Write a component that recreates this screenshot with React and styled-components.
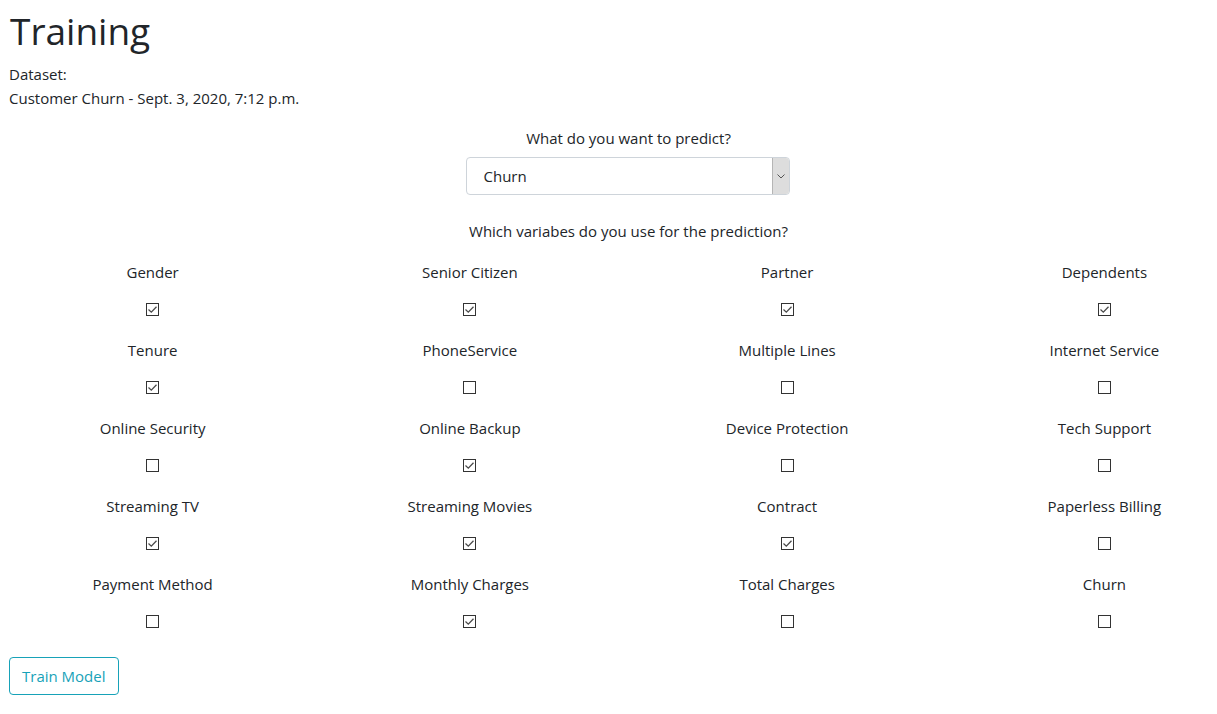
import React from 'react';
import styled, { createGlobalStyle } from 'styled-components';

const GlobalStyle = createGlobalStyle`
    html, body {
        margin: 0;
        padding: 0;
        background: #fff;
        overflow: hidden;
    }
    body {
        font-family: "Open Sans", "Noto Sans", sans-serif;
        font-size: 15px;
        line-height: 24px;
        color: #212529;
    }
`;

const variables = [
    ['Gender', true], ['Senior Citizen', true], ['Partner', true], ['Dependents', true],
    ['Tenure', true], ['PhoneService', false], ['Multiple Lines', false], ['Internet Service', false],
    ['Online Security', false], ['Online Backup', true], ['Device Protection', false], ['Tech Support', false],
    ['Streaming TV', true], ['Streaming Movies', true], ['Contract', true], ['Paperless Billing', false],
    ['Payment Method', false], ['Monthly Charges', true], ['Total Charges', false], ['Churn', false],
];

const Check = ({ checked }) => (
    <StyledCheck>
        {checked && (
            <svg width="11" height="11" viewBox="0 0 11 11">
                <path d="M1.5 5.5 L4.3 8.2 L9.5 2.8" fill="none" stroke="#4a4a4a" strokeWidth="1.3" />
            </svg>
        )}
    </StyledCheck>
);

const App = () => {
    return (
        <Page>
            <GlobalStyle />
            <Title>Training</Title>
            <Meta>Dataset:</Meta>
            <Meta>Customer Churn - Sept. 3, 2020, 7:12 p.m.</Meta>
            <Form>
                <Question>What do you want to predict?</Question>
                <SelectBox>
                    <span>Churn</span>
                    <SelectArrow>
                        <svg width="10" height="7" viewBox="0 0 10 7">
                            <path d="M1.5 1.5 L5 5 L8.5 1.5" fill="none" stroke="#555" strokeWidth="1" />
                        </svg>
                    </SelectArrow>
                </SelectBox>
                <Question $top="24px">Which variabes do you use for the prediction?</Question>
                <Grid>
                    {variables.map(([name, checked]) => (
                        <Cell key={name}>
                            <span>{name}</span>
                            <Check checked={checked} />
                        </Cell>
                    ))}
                </Grid>
            </Form>
            <Button>Train Model</Button>
        </Page>
    );
};

const Page = styled.div`
    padding: 5px 10px 0 10px;
`;

const Title = styled.h1`
    margin: 0 0 7px 0;
    padding-top: 2px;
    font-size: 37px;
    line-height: 48px;
    font-weight: 400;
`;

const Meta = styled.div`
    margin-left: -1px;
`;

const Form = styled.div`
    width: 1269px;
    margin-left: -16px;
    margin-top: 16px;
    display: flex;
    flex-direction: column;
    align-items: center;
`;

const Question = styled.div`
    margin-top: ${p => p.$top || '0'};
    margin-bottom: 7px;
`;

const SelectBox = styled.div`
    box-sizing: border-box;
    width: 324px;
    height: 38px;
    border: 1px solid #ced4da;
    border-radius: 4px;
    display: flex;
    align-items: center;
    justify-content: space-between;
    padding-left: 17px;
    margin-left: -2px;
    overflow: hidden;
`;

const SelectArrow = styled.div`
    width: 16px;
    height: 100%;
    background: #dddddd;
    border-left: 1px solid #b5b5b5;
    display: flex;
    align-items: center;
    justify-content: center;
`;

const Grid = styled.div`
    display: grid;
    grid-template-columns: repeat(4, 1fr);
    width: 100%;
    margin-top: 10px;
    row-gap: 22px;
`;

const Cell = styled.div`
    display: flex;
    flex-direction: column;
    align-items: center;
    gap: 19px;
`;

const StyledCheck = styled.span`
    box-sizing: border-box;
    width: 13px;
    height: 13px;
    border: 1px solid #333;
    display: flex;
    align-items: center;
    justify-content: center;
`;

const Button = styled.button`
    margin-top: 29px;
    margin-left: -1px;
    height: 38px;
    padding: 0 12px;
    font-family: inherit;
    font-size: 15px;
    color: #17a2b8;
    background: #fff;
    border: 1px solid #17a2b8;
    border-radius: 4px;
    cursor: pointer;
`;

export default App;
